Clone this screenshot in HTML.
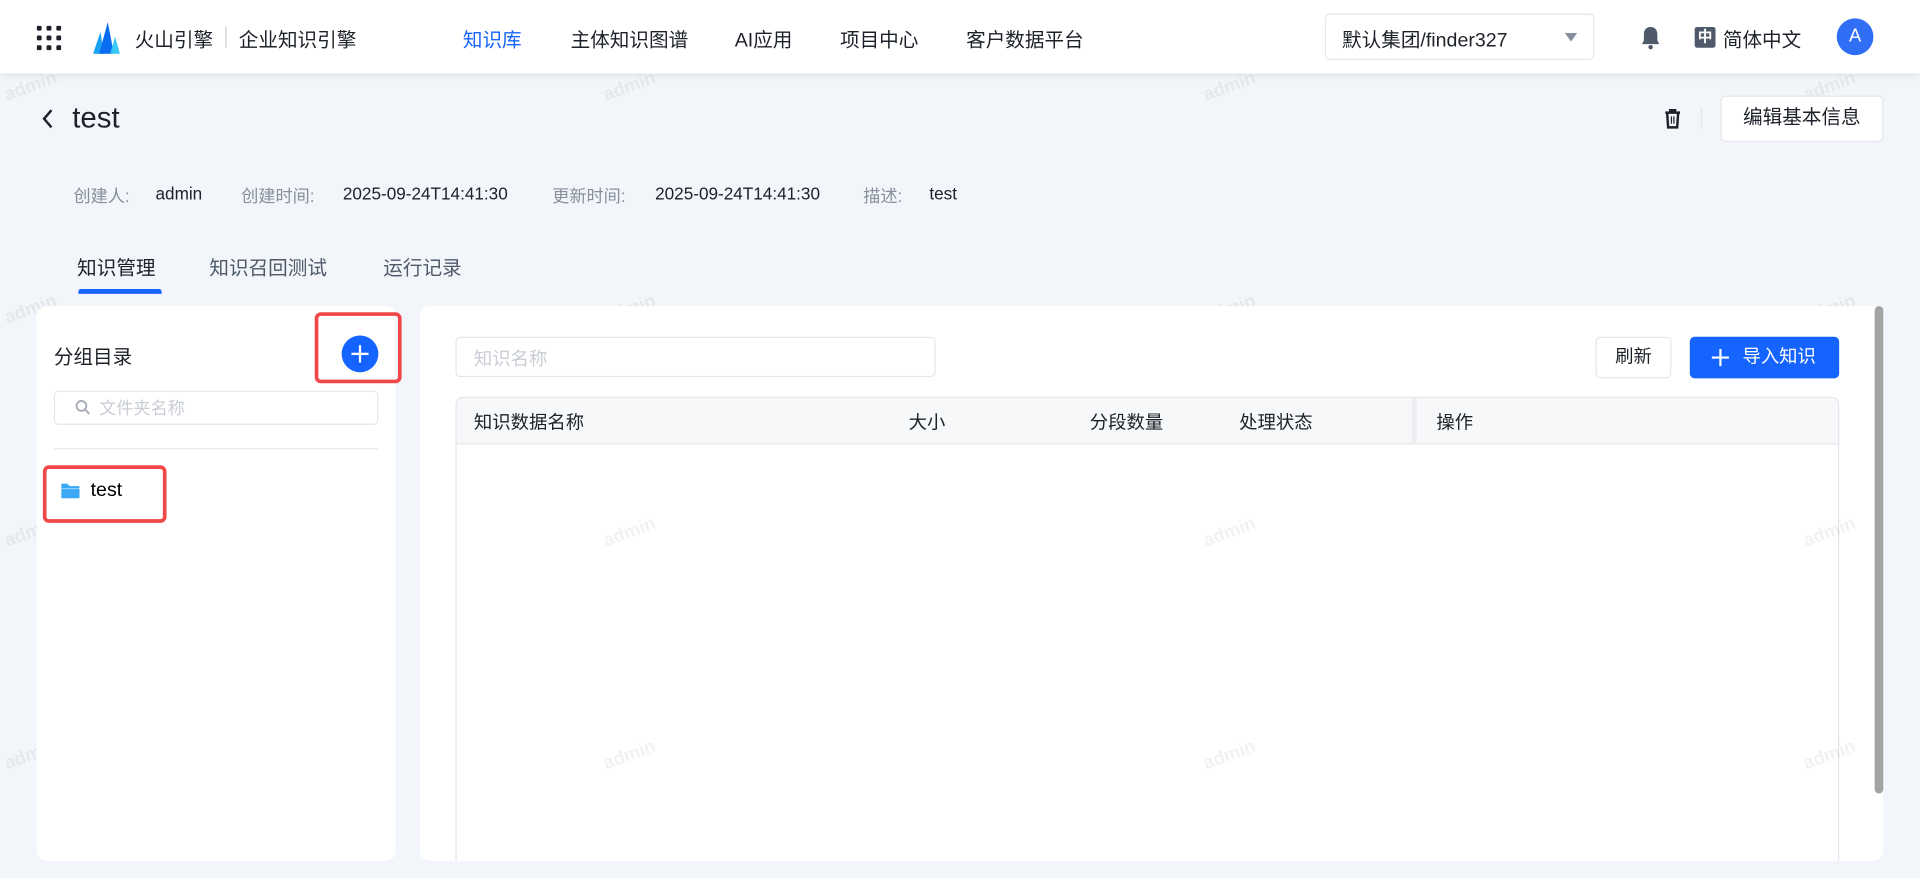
<!DOCTYPE html>
<html><head><meta charset="utf-8"><style>
*{box-sizing:border-box;margin:0;padding:0}
html,body{width:1920px;height:878px;overflow:hidden;background:#f2f5fa}
#w{position:absolute;left:0;top:0;width:1568px;height:717px;transform:scale(1.22449);transform-origin:0 0;font-family:"Liberation Sans","Noto Sans CJK SC",sans-serif;color:#1d2129}
.a{position:absolute;white-space:nowrap}
.nav{left:0;top:0;width:1568px;height:60px;background:#fff;box-shadow:0 2px 6px rgba(0,0,0,.08)}
.ni{font-size:16px;top:19px;color:#1d2129}
.m{font-size:14px;top:150px}
.g{color:#86909c}
.wm{color:rgba(0,0,0,.055);font-size:15px;transform:rotate(-20deg);font-weight:bold}
.panel{background:#fff;border-radius:8px}
.red{border:3px solid #f04848;border-radius:5px}
.th{font-size:15px;top:334px;color:#1d2129}
</style></head><body><div id="w">
<div class="a nav"></div>
<svg class="a" style="left:30px;top:21px" width="20" height="20"><g fill="#1d2129"><rect x="0" y="0" width="4" height="4" rx="1"/><rect x="8" y="0" width="4" height="4" rx="1"/><rect x="16" y="0" width="4" height="4" rx="1"/><rect x="0" y="8" width="4" height="4" rx="1"/><rect x="8" y="8" width="4" height="4" rx="1"/><rect x="16" y="8" width="4" height="4" rx="1"/><rect x="0" y="16" width="4" height="4" rx="1"/><rect x="8" y="16" width="4" height="4" rx="1"/><rect x="16" y="16" width="4" height="4" rx="1"/></g></svg>
<svg class="a" style="left:76px;top:18px" width="22" height="26"><path d="M0 26 L6 8 L9 26Z" fill="#1aa3f0"/><path d="M5 26 L12 0 L17 26Z" fill="#0a6cf0"/><path d="M14 26 L18 12 L22 26Z" fill="#38c8f5"/></svg>
<div class="a ni" style="left:110px">火山引擎</div>
<div class="a" style="left:184px;top:22px;width:1px;height:17px;background:#c9cdd4"></div>
<div class="a ni" style="left:195px">企业知识引擎</div>
<div class="a ni" style="left:378px;color:#1664ff">知识库</div>
<div class="a ni" style="left:466px">主体知识图谱</div>
<div class="a ni" style="left:600px">AI应用</div>
<div class="a ni" style="left:686px">项目中心</div>
<div class="a ni" style="left:789px">客户数据平台</div>
<div class="a" style="left:1082px;top:11px;width:220px;height:38px;border:1px solid #e5e6eb;border-radius:4px"></div>
<div class="a ni" style="left:1096px;top:19px">默认集团/finder327</div>
<div class="a" style="left:1278px;top:27px;border-left:5px solid transparent;border-right:5px solid transparent;border-top:7px solid #86909c"></div>
<svg class="a" style="left:1339px;top:21px" width="18" height="20"><path d="M9 1C5 1 3.5 4 3.5 7v5L2 15h14l-1.5-3V7C14.5 4 13 1 9 1Z" fill="#4e5969"/><circle cx="9" cy="17.5" r="1.8" fill="#4e5969"/></svg>
<div class="a" style="left:1384px;top:22px;width:17px;height:17px;background:#4e5969;border-radius:2px;color:#fff;font-size:12px;text-align:center;line-height:17px;font-weight:bold">中</div>
<div class="a ni" style="left:1407px">简体中文</div>
<div class="a" style="left:1500px;top:15px;width:30px;height:30px;border-radius:50%;background:#2f6ef5;color:#fff;font-size:15px;text-align:center;line-height:30px">A</div>

<div class="a wm" style="left:3px;top:62px">admin</div><div class="a wm" style="left:492px;top:62px">admin</div><div class="a wm" style="left:982px;top:62px">admin</div><div class="a wm" style="left:1472px;top:62px">admin</div>
<div class="a wm" style="left:3px;top:244px">admin</div><div class="a wm" style="left:492px;top:244px">admin</div><div class="a wm" style="left:982px;top:244px">admin</div><div class="a wm" style="left:1472px;top:244px">admin</div>
<div class="a wm" style="left:3px;top:426px">admin</div>
<div class="a wm" style="left:3px;top:608px">admin</div>

<svg class="a" style="left:33px;top:88px" width="12" height="18"><path d="M9 2L3 9l6 7" stroke="#1d2129" stroke-width="2" fill="none"/></svg>
<div class="a" style="left:59px;top:83px;font-size:24px">test</div>
<svg class="a" style="left:1358px;top:88px" width="16" height="18"><path d="M2 4h12M6 4V2h4v2M3.5 4l.8 12h7.4l.8-12" stroke="#1d2129" stroke-width="2" fill="none"/><path d="M7 7v6M9 7v6" stroke="#1d2129" stroke-width="1"/></svg>
<div class="a" style="left:1389px;top:88px;width:1px;height:18px;background:#e5e6eb"></div>
<div class="a" style="left:1405px;top:78px;width:133px;height:38px;background:#fff;border:1px solid #e5e6eb;border-radius:4px;font-size:16px;text-align:center;line-height:36px">编辑基本信息</div>

<div class="a m g" style="left:60px">创建人:</div><div class="a m" style="left:127px">admin</div>
<div class="a m g" style="left:197px">创建时间:</div><div class="a m" style="left:280px">2025-09-24T14:41:30</div>
<div class="a m g" style="left:451px">更新时间:</div><div class="a m" style="left:535px">2025-09-24T14:41:30</div>
<div class="a m g" style="left:705px">描述:</div><div class="a m" style="left:759px">test</div>

<div class="a" style="left:63px;top:205px;font-size:16px">知识管理</div>
<div class="a" style="left:171px;top:205px;font-size:16px;color:#4e5969">知识召回测试</div>
<div class="a" style="left:313px;top:205px;font-size:16px;color:#4e5969">运行记录</div>
<div class="a" style="left:64px;top:236px;width:68px;height:4px;background:#1664ff;border-radius:2px 2px 0 0"></div>

<div class="a panel" style="left:30px;top:250px;width:293px;height:453px"></div>
<div class="a" style="left:44px;top:278px;font-size:16px">分组目录</div>
<div class="a" style="left:279px;top:274px;width:30px;height:30px;border-radius:50%;background:#1664ff"></div>
<svg class="a" style="left:286px;top:281px" width="16" height="16"><path d="M8 1v14M1 8h14" stroke="#fff" stroke-width="1.8"/></svg>
<div class="a red" style="left:257px;top:255px;width:71px;height:58px"></div>
<div class="a" style="left:44px;top:319px;width:265px;height:28px;border:1px solid #e5e6eb;border-radius:4px"></div>
<svg class="a" style="left:61px;top:326px" width="13" height="13"><circle cx="5.5" cy="5.5" r="4" stroke="#a9aeb8" stroke-width="1.6" fill="none"/><path d="M8.5 8.5l3.5 3.5" stroke="#a9aeb8" stroke-width="1.6"/></svg>
<div class="a" style="left:81px;top:323px;font-size:14px;color:#c9cdd4">文件夹名称</div>
<div class="a" style="left:44px;top:366px;width:265px;height:1px;background:#e5e6eb"></div>
<svg class="a" style="left:50px;top:394px" width="15" height="13"><path d="M0 2a1 1 0 011-1h4l2 2h7a1 1 0 011 1v8a1 1 0 01-1 1H1a1 1 0 01-1-1Z" fill="#3ba8f5"/><path d="M0 5h15" stroke="#8fd0fb" stroke-width="1"/></svg>
<div class="a" style="left:74px;top:392px;font-size:16px;color:#000">test</div>
<div class="a red" style="left:35px;top:380px;width:101px;height:47px"></div>

<div class="a panel" style="left:343px;top:250px;width:1195px;height:453px;overflow:hidden">
<div class="a" style="left:29px;top:74px;width:1130px;height:400px;border:1px solid #e5e6eb;border-radius:6px"></div>
</div>
<div class="a" style="left:372px;top:275px;width:392px;height:33px;border:1px solid #e5e6eb;border-radius:4px"></div>
<div class="a" style="left:387px;top:282px;font-size:15px;color:#c9cdd4">知识名称</div>
<div class="a" style="left:1303px;top:275px;width:62px;height:34px;border:1px solid #e5e6eb;border-radius:4px;font-size:15px;text-align:center;line-height:32px">刷新</div>
<div class="a" style="left:1380px;top:275px;width:122px;height:34px;background:#1664ff;border-radius:4px;color:#fff;font-size:15px;line-height:34px;padding-left:43px">导入知识</div>
<svg class="a" style="left:1397px;top:284px" width="16" height="16"><path d="M8 1v14M1 8h14" stroke="#fff" stroke-width="1.8"/></svg>
<div class="a" style="left:373px;top:325px;width:1128px;height:38px;background:#f7f8fa;border-bottom:1px solid #e5e6eb;border-radius:6px 6px 0 0"></div>
<div class="a" style="left:1153px;top:325px;width:4px;height:38px;background:#eceef2"></div>
<div class="a th" style="left:387px">知识数据名称</div>
<div class="a th" style="left:742px">大小</div>
<div class="a th" style="left:890px">分段数量</div>
<div class="a th" style="left:1012px">处理状态</div>
<div class="a th" style="left:1173px">操作</div>
<div class="a" style="left:1531px;top:250px;width:7px;height:398px;background:#a3a3a3;border-radius:4px"></div>
<div class="a wm" style="left:492px;top:426px">admin</div><div class="a wm" style="left:982px;top:426px">admin</div><div class="a wm" style="left:1472px;top:426px">admin</div>
<div class="a wm" style="left:492px;top:608px">admin</div><div class="a wm" style="left:982px;top:608px">admin</div><div class="a wm" style="left:1472px;top:608px">admin</div>
</div></body></html>
